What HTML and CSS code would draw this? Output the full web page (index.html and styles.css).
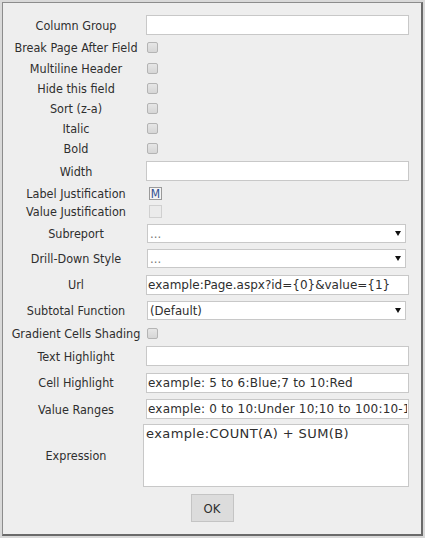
FILE: index.html
```html
<!DOCTYPE html>
<html>
<head>
<meta charset="utf-8">
<link rel="stylesheet" href="styles.css">
</head>
<body>
<div class="dialog">
  <div class="form">
    <div class="row h22"><label class="lbl">Column Group</label><div class="val"><input class="txt" type="text"></div></div>
    <div class="row h22"><label class="lbl">Break Page After Field</label><div class="val"><span class="cb"></span></div></div>
    <div class="row h20"><label class="lbl">Multiline Header</label><div class="val"><span class="cb"></span></div></div>
    <div class="row h20"><label class="lbl">Hide this field</label><div class="val"><span class="cb"></span></div></div>
    <div class="row h20"><label class="lbl">Sort (z-a)</label><div class="val"><span class="cb"></span></div></div>
    <div class="row h20"><label class="lbl">Italic</label><div class="val"><span class="cb"></span></div></div>
    <div class="row h20"><label class="lbl">Bold</label><div class="val"><span class="cb"></span></div></div>
    <div class="row h26"><label class="lbl">Width</label><div class="val"><input class="txt" type="text"></div></div>
    <div class="row h19"><label class="lbl">Label Justification</label><div class="val"><span class="just">M</span></div></div>
    <div class="row h17"><label class="lbl">Value Justification</label><div class="val"><span class="just off"></span></div></div>
    <div class="row h26"><label class="lbl">Subreport</label><div class="val"><span class="sel"><span class="sel-text dim">...</span></span></div></div>
    <div class="row h25"><label class="lbl">Drill-Down Style</label><div class="val"><span class="sel"><span class="sel-text dim">...</span></span></div></div>
    <div class="row h27"><label class="lbl">Url</label><div class="val"><input class="txt" type="text" value="example:Page.aspx?id={0}&amp;value={1}"></div></div>
    <div class="row h25"><label class="lbl">Subtotal Function</label><div class="val"><span class="sel"><span class="sel-text">(Default)</span></span></div></div>
    <div class="row h20"><label class="lbl">Gradient Cells Shading</label><div class="val"><span class="cb"></span></div></div>
    <div class="row h26"><label class="lbl">Text Highlight</label><div class="val"><input class="txt" type="text"></div></div>
    <div class="row h27"><label class="lbl">Cell Highlight</label><div class="val"><input class="txt wide" type="text" value="example: 5 to 6:Blue;7 to 10:Red"></div></div>
    <div class="row h26"><label class="lbl">Value Ranges</label><div class="val"><input class="txt wide" type="text" value="example: 0 to 10:Under 10;10 to 100:10-100"></div></div>
    <div class="row h67"><label class="lbl">Expression</label><div class="val"><textarea class="area">example:COUNT(A) + SUM(B)</textarea></div></div>
  </div>
  <div class="actions"><button class="ok" type="button">OK</button></div>
</div>
</body>
</html>
```

FILE: styles.css
```css
html, body {
  margin: 0;
  padding: 0;
}
body {
  background: #d9d9d9;
  width: 425px;
  height: 538px;
  font-family: "DejaVu Sans Condensed", "DejaVu Sans", sans-serif;
  font-size: 12.5px;
  color: #2e2e2e;
}
.dialog {
  box-sizing: border-box;
  margin: 2px 0 0 2px;
  width: 421px;
  height: 534px;
  background: #eeeeee;
  border-top: 1px solid #8c8c8c;
  border-left: 1px solid #8c8c8c;
  border-right: 2px solid #6a6a6a;
  border-bottom: 2px solid #6a6a6a;
  display: flex;
  flex-direction: column;
}
.form {
  padding: 11px 0 0 3px;
  display: flex;
  flex-direction: column;
}
.row {
  display: flex;
  align-items: center;
}
.h17 { height: 17px; }
.h19 { height: 19px; }
.h20 { height: 20px; }
.h22 { height: 22px; }
.h25 { height: 25px; }
.h26 { height: 26px; }
.h27 { height: 27px; }
.h67 { height: 67px; }
.lbl {
  width: 140px;
  text-align: center;
  white-space: nowrap;
}
.val {
  display: flex;
  align-items: center;
}
.txt {
  box-sizing: border-box;
  width: 263px;
  height: 20px;
  margin: 0;
  padding: 0 1px;
  border: 1px solid #c8c8c8;
  background: #fff;
  font-family: "DejaVu Sans", sans-serif;
  font-size: 12px;
  color: #2e2e2e;
  outline: none;
}
.txt.wide {
  letter-spacing: 0.2px;
}
.cb {
  box-sizing: border-box;
  display: block;
  width: 11px;
  height: 11px;
  margin-left: 1px;
  border: 1px solid #b4b4b4;
  border-radius: 2px;
  background: linear-gradient(#e6e6e6, #d6d6d6);
}
.just {
  box-sizing: border-box;
  display: flex;
  align-items: center;
  justify-content: center;
  width: 13px;
  height: 13px;
  margin-left: 3px;
  border: 1px solid #9a9a9a;
  background: #f4f4f4;
  color: #2f4f8f;
  font-size: 12px;
  line-height: 1;
}
.just.off {
  border-color: #d0d0d0;
  background: #ebebeb;
}
.sel {
  box-sizing: border-box;
  position: relative;
  display: flex;
  align-items: center;
  width: 259px;
  height: 19px;
  margin-left: 1px;
  padding-left: 2px;
  border: 1px solid #c8c8c8;
  background: #fff;
}
.sel::after {
  content: "";
  position: absolute;
  right: 4px;
  top: 6px;
  border-left: 3px solid transparent;
  border-right: 3px solid transparent;
  border-top: 5px solid #111;
}
.sel-text {
  color: #2e2e2e;
  font-size: 13px;
}
.sel-text.dim {
  color: #777;
}
.area {
  box-sizing: border-box;
  width: 266px;
  height: 63px;
  margin: 0 0 0 -3px;
  padding: 1px 2px;
  border: 1px solid #c8c8c8;
  background: #fff;
  font-family: "DejaVu Sans", sans-serif;
  font-size: 13px;
  letter-spacing: 0.4px;
  color: #2e2e2e;
  resize: none;
  outline: none;
}
.actions {
  height: 38px;
  display: flex;
  align-items: center;
  justify-content: center;
}
.ok {
  box-sizing: border-box;
  width: 43px;
  height: 28px;
  border: 1px solid #c4c4c4;
  background: #dcdcdc;
  font: inherit;
  font-size: 13px;
  color: #2e2e2e;
  padding: 0;
}
```
